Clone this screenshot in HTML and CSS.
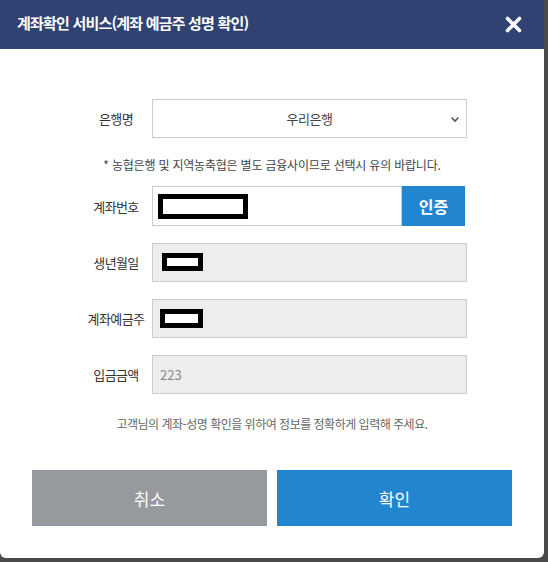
FILE: index.html
```html
<!DOCTYPE html>
<html lang="ko">
<head>
    <meta charset="UTF-8">
    <meta name="viewport" content="width=device-width, initial-scale=1.0">
    <title>계좌확인 서비스</title>
    <link rel="stylesheet" href="styles.css">
</head>
<body>
    <!-- Modal -->
    <div class="modal">
        <header class="modal-header">
            <h1>계좌확인 서비스(계좌 예금주 성명 확인)</h1>
            <button class="close-button" aria-label="닫기">
                <svg width="17" height="17" viewBox="0 0 17 17">
                    <path d="M2.5 2.5 L14.5 14.5 M14.5 2.5 L2.5 14.5" stroke="#ffffff" stroke-width="3.6" stroke-linecap="round"/>
                </svg>
            </button>
        </header>

        <main class="modal-body">
            <div class="form-row">
                <label class="form-label">은행명</label>
                <div class="field select-field">
                    <span class="select-text">우리은행</span>
                    <svg class="chevron" width="10" height="7" viewBox="0 0 10 7">
                        <path d="M1.5 1.5 L5 5 L8.5 1.5" fill="none" stroke="#555" stroke-width="1.6"/>
                    </svg>
                </div>
            </div>

            <p class="notice">* 농협은행 및 지역농축협은 별도 금융사이므로 선택시 유의 바랍니다.</p>

            <div class="form-row">
                <label class="form-label">계좌번호</label>
                <div class="field account-field">
                    <span class="redact redact-account"></span>
                </div>
                <button class="verify-button">인증</button>
            </div>

            <div class="form-row">
                <label class="form-label">생년월일</label>
                <div class="field readonly">
                    <span class="redact redact-short"></span>
                </div>
            </div>

            <div class="form-row">
                <label class="form-label">계좌예금주</label>
                <div class="field readonly">
                    <span class="redact redact-name"></span>
                </div>
            </div>

            <div class="form-row">
                <label class="form-label">입금금액</label>
                <div class="field readonly">
                    <span class="field-value">223</span>
                </div>
            </div>

            <p class="help-text">고객님의 계좌-성명 확인을 위하여 정보를 정확하게 입력해 주세요.</p>
        </main>

        <!-- Footer Buttons -->
        <footer class="modal-footer">
            <button class="btn btn-cancel">취소</button>
            <button class="btn btn-confirm">확인</button>
        </footer>
    </div>
</body>
</html>
```

FILE: styles.css
```css
/* General Reset */
* {
    margin: 0;
    padding: 0;
    box-sizing: border-box;
    font-family: "Noto Sans CJK KR", "Noto Sans", sans-serif;
}

body {
    background-color: #4a4a4a;
    width: 548px;
    height: 562px;
    overflow: hidden;
}

/* Modal */
.modal {
    width: 544px;
    height: 558px;
    background: #ffffff;
    border-radius: 0 0 6px 6px;
    display: flex;
    flex-direction: column;
}

/* Header */
.modal-header {
    height: 49px;
    background-color: #2f4272;
    display: flex;
    align-items: center;
    justify-content: space-between;
    padding: 0 22px 0 17px;
}

.modal-header h1 {
    color: #ffffff;
    font-size: 15px;
    font-weight: 700;
    letter-spacing: -0.8px;
    margin-top: -4px;
}

.close-button {
    background: none;
    border: none;
    width: 17px;
    height: 17px;
    display: flex;
    cursor: pointer;
}

/* Body */
.modal-body {
    padding-top: 49px;
    display: flex;
    flex-direction: column;
}

.form-row {
    display: flex;
    align-items: center;
    padding-left: 80px;
    height: 40px;
    margin-bottom: 16px;
}

.form-label {
    width: 72px;
    text-align: center;
    font-size: 13px;
    color: #333333;
    letter-spacing: -0.6px;
}

.field {
    width: 315px;
    height: 40px;
    border: 1px solid #cccccc;
    display: flex;
    align-items: center;
    padding-left: 7px;
    font-size: 13px;
}

.select-field {
    height: 39px;
    position: relative;
    justify-content: center;
    padding-left: 0;
}

.select-text {
    color: #444444;
    letter-spacing: -0.5px;
}

.chevron {
    position: absolute;
    right: 6px;
    top: 16px;
}

.readonly {
    background-color: #ededed;
    height: 39px;
}

.field-value {
    color: #888888;
}

.account-field {
    width: 250px;
    padding-left: 5px;
}

.verify-button {
    width: 63px;
    height: 40px;
    background-color: #2185d0;
    color: #ffffff;
    border: none;
    font-size: 16px;
    font-weight: 700;
}

/* Redacted boxes */
.redact {
    display: block;
    border: 5px solid #000000;
    background: #ffffff;
}

.redact-account {
    width: 90px;
    height: 25px;
}

.redact-short {
    width: 41px;
    height: 18px;
    margin-left: 2px;
}

.redact-name {
    width: 43px;
    height: 19px;
}

.notice {
    font-size: 12px;
    line-height: 18px;
    color: #444444;
    text-align: center;
    letter-spacing: -0.2px;
    margin: 2px 0 12px;
}

.help-text {
    font-size: 12px;
    line-height: 18px;
    color: #666666;
    text-align: center;
    letter-spacing: -0.5px;
    margin-top: 5px;
}

/* Footer */
.modal-footer {
    display: flex;
    gap: 10px;
    padding: 0 32px;
    margin-top: 37px;
}

.btn {
    width: 235px;
    height: 56px;
    border: none;
    color: #ffffff;
    font-size: 17px;
    cursor: pointer;
}

.btn-cancel {
    background-color: #969a9f;
}

.btn-confirm {
    background-color: #2185d0;
}
```
